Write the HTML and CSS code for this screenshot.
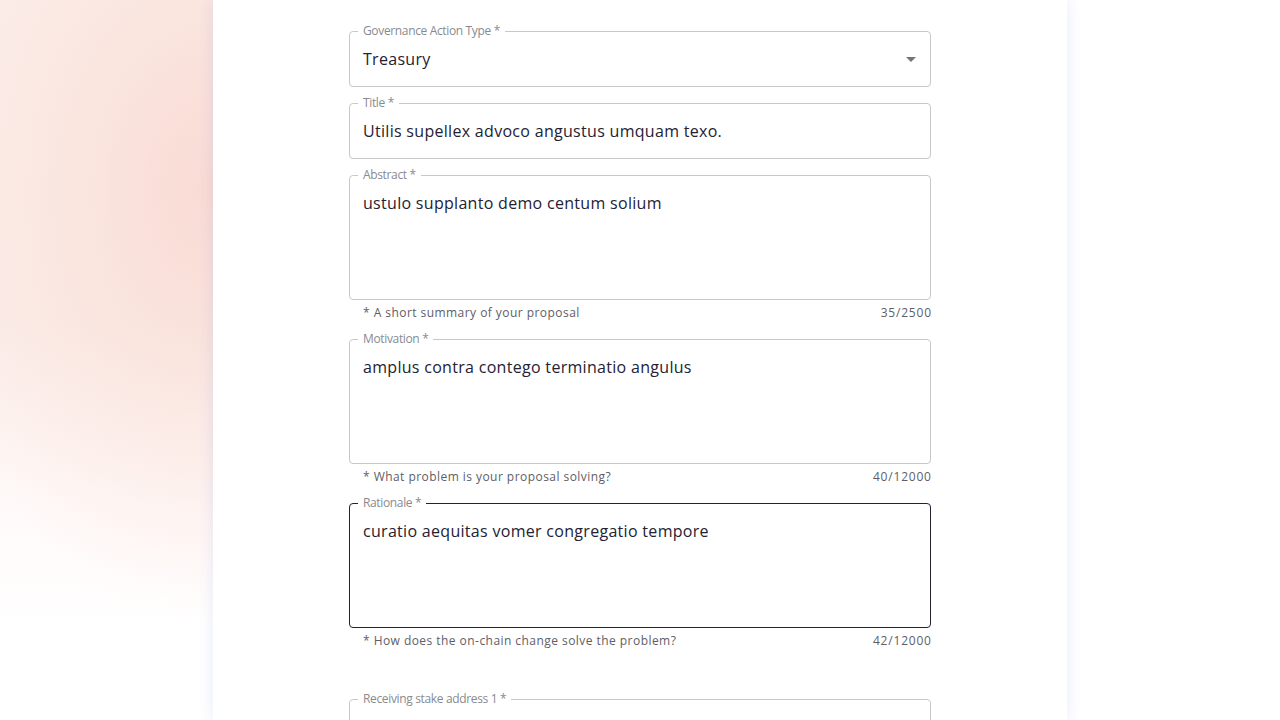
FILE: index.html
```html
<!DOCTYPE html>
<html lang="en">
<head>
<meta charset="utf-8">
<title>Create a Governance Action</title>
<link rel="stylesheet" href="styles.css">
</head>
<body>
<div class="page">
  <main class="card">
    <form class="form">
      <div class="group">
        <fieldset class="field">
          <legend>Governance Action Type *</legend>
          <div class="value select">
            <span>Treasury</span>
            <svg class="arrow" width="24" height="24" viewBox="0 0 24 24"><path d="M7 10l5 5 5-5z" fill="#757575"/></svg>
          </div>
        </fieldset>
      </div>
      <div class="group">
        <fieldset class="field">
          <legend>Title *</legend>
          <div class="value">Utilis supellex advoco angustus umquam texo.</div>
        </fieldset>
      </div>
      <div class="group">
        <fieldset class="field">
          <legend>Abstract *</legend>
          <div class="value area">ustulo supplanto demo centum solium</div>
        </fieldset>
        <div class="helper"><span>* A short summary of your proposal</span><span class="count">35/2500</span></div>
      </div>
      <div class="group">
        <fieldset class="field">
          <legend>Motivation *</legend>
          <div class="value area">amplus contra contego terminatio angulus</div>
        </fieldset>
        <div class="helper"><span>* What problem is your proposal solving?</span><span class="count">40/12000</span></div>
      </div>
      <div class="group">
        <fieldset class="field focused">
          <legend>Rationale *</legend>
          <div class="value area">curatio aequitas vomer congregatio tempore</div>
        </fieldset>
        <div class="helper"><span>* How does the on-chain change solve the problem?</span><span class="count">42/12000</span></div>
      </div>
      <div class="group section">
        <fieldset class="field">
          <legend>Receiving stake address 1 *</legend>
          <div class="value">&nbsp;</div>
        </fieldset>
      </div>
    </form>
  </main>
</div>
</body>
</html>
```
FILE: styles.css
```css
html, body {
  margin: 0;
  padding: 0;
  height: 100%;
  overflow: hidden;
}
body {
  font-family: "Open Sans", "Noto Sans", sans-serif;
  color: #242232;
  background-color: #ffffff;
  background-image:
    radial-gradient(ellipse 300px 430px at 210px 190px, rgba(249, 214, 206, 0.8) 0%, rgba(249, 222, 214, 0.55) 45%, rgba(252, 240, 236, 0) 100%),
    linear-gradient(180deg, #fcefeb 0%, #fbeeea 45%, #fffaf9 70%, #ffffff 88%);
  background-size: 214px 100%, 214px 100%;
  background-repeat: no-repeat;
}
.page {
  display: flex;
  justify-content: center;
  height: 100%;
}
.card {
  width: 854px;
  box-sizing: border-box;
  background: #fff;
  padding: 23px 136px 40px;
  box-shadow: 0 0 14px rgba(60, 90, 220, 0.12);
}
.form {
  display: flex;
  flex-direction: column;
  gap: 8px;
}
.group {
  display: flex;
  flex-direction: column;
}
.group.section {
  margin-top: 32px;
}
.field {
  margin: 0;
  padding: 0 13px;
  border: 1px solid #c8c8c8;
  border-radius: 4px;
  min-width: 0;
}
.field.focused {
  border-color: #242232;
}
.field legend {
  font-size: 12px;
  line-height: 16px;
  padding: 0 5px;
  margin-left: -5px;
  color: #8a8a8e;
  letter-spacing: -0.35px;
}
.value {
  font-size: 16px;
  line-height: 24px;
  letter-spacing: 0.3px;
  padding: 8px 0 15px;
  white-space: nowrap;
}
.value.area {
  height: 96px;
  padding-bottom: 12px;
}
.select {
  display: flex;
  align-items: center;
  justify-content: space-between;
}
.arrow {
  margin-right: -6px;
  display: block;
}
.helper {
  display: flex;
  justify-content: space-between;
  margin-top: 3px;
  padding-left: 14px;
  font-size: 12px;
  line-height: 20px;
  letter-spacing: 0.45px;
  color: #5e5e66;
}
.helper .count {
  letter-spacing: 0.8px;
  margin-right: -0.8px;
}
```
